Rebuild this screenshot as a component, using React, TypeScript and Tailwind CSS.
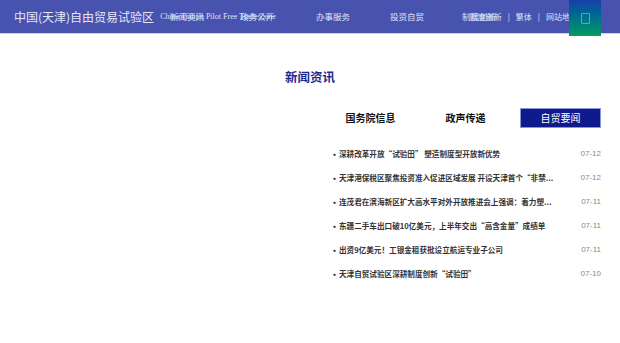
import React from "react";

const news = [
  { t: "深耕改革开放“试验田” 塑造制度型开放新优势", d: "07-12" },
  { t: "天津港保税区聚焦投资准入促进区域发展 开设天津首个“非禁...", d: "07-12" },
  { t: "连茂君在滨海新区扩大高水平对外开放推进会上强调：着力塑...", d: "07-11" },
  { t: "东疆二手车出口破10亿美元，上半年交出“高含金量”成绩单", d: "07-11" },
  { t: "出资9亿美元！工银金租获批设立航运专业子公司", d: "07-11" },
  { t: "天津自贸试验区深耕制度创新“试验田”", d: "07-10" },
];

const cjk = { fontFamily: '"Noto Sans CJK SC", "Noto Sans", sans-serif' };

export default function App() {
  return (
    <div className="w-[620px] h-[343px] bg-white overflow-hidden" style={cjk}>
      {/* Header */}
      <div className="relative h-[34px] bg-[#4853b0] border-b border-[#cdd1ec]">
        <div className="flex items-center h-[33px] pl-[14px]">
          <span className="text-[12px] text-[#e4e7f8] leading-none">中国(天津)自由贸易试验区</span>
          <span
            className="ml-[6px] text-[8px] text-[#dfe2f5] leading-none"
            style={{ fontFamily: '"Liberation Serif", serif' }}
          >
            China Tianjin Pilot Free Trade Zone
          </span>
        </div>
        <div className="absolute inset-0 flex items-center pl-[170px] text-[8.5px] text-[#dfe2f5] leading-none">
          <span className="w-[70px]">新闻资讯</span>
          <span className="w-[76px]">政务公开</span>
          <span className="w-[74px]">办事服务</span>
          <span className="w-[72px]">投资自贸</span>
          <span className="w-[72px]">制度创新</span>
        </div>
        <div className="absolute inset-0 flex items-center justify-end pr-[42px] text-[8px] text-[#dfe2f5] leading-none gap-[6px]">
          <span>制度创新</span>
          <span>|</span>
          <span>繁体</span>
          <span>|</span>
          <span>网站地图</span>
        </div>
        <div className="absolute right-[19px] top-0 w-[32px] h-[36px] bg-gradient-to-b from-[#1a3ca8] to-[#0c9a5a] flex items-center justify-center">
          <div className="w-[9px] h-[11px] border border-[#6fa0b8] rounded-[1px]" />
        </div>
      </div>

      {/* Main */}
      <div className="flex justify-end pr-[19px]">
        <div className="w-[316px]">
          <div className="mt-[34px] h-[18px] flex items-center text-[12.5px] font-bold text-[#1b2a8f] leading-none">
            新闻资讯
          </div>
          <div className="ml-[45px]">
            <div className="mt-[22px] grid grid-cols-3 gap-[14px]">
              <div className="h-[20px] flex items-center justify-center text-[10px] font-bold text-[#111] leading-none">
                国务院信息
              </div>
              <div className="h-[20px] flex items-center justify-center text-[10px] font-bold text-[#111] leading-none">
                政声传递
              </div>
              <div className="h-[20px] flex items-center justify-center text-[10px] text-white bg-[#0f1a8c] border border-[#8d94d6] leading-none">
                自贸要闻
              </div>
            </div>
            <div className="mt-[14px]">
              {news.map((n) => (
                <div key={n.t} className="h-[24px] flex items-center justify-between">
                  <div className="flex items-center text-[7.6px] font-bold text-[#333] leading-none">
                    <span className="w-[9px] text-[9px]">•</span>
                    <span>{n.t}</span>
                  </div>
                  <span
                    className="text-[8px] text-[#888] leading-none"
                    style={{ fontFamily: '"Liberation Sans", sans-serif' }}
                  >
                    {n.d}
                  </span>
                </div>
              ))}
            </div>
          </div>
        </div>
      </div>
    </div>
  );
}
